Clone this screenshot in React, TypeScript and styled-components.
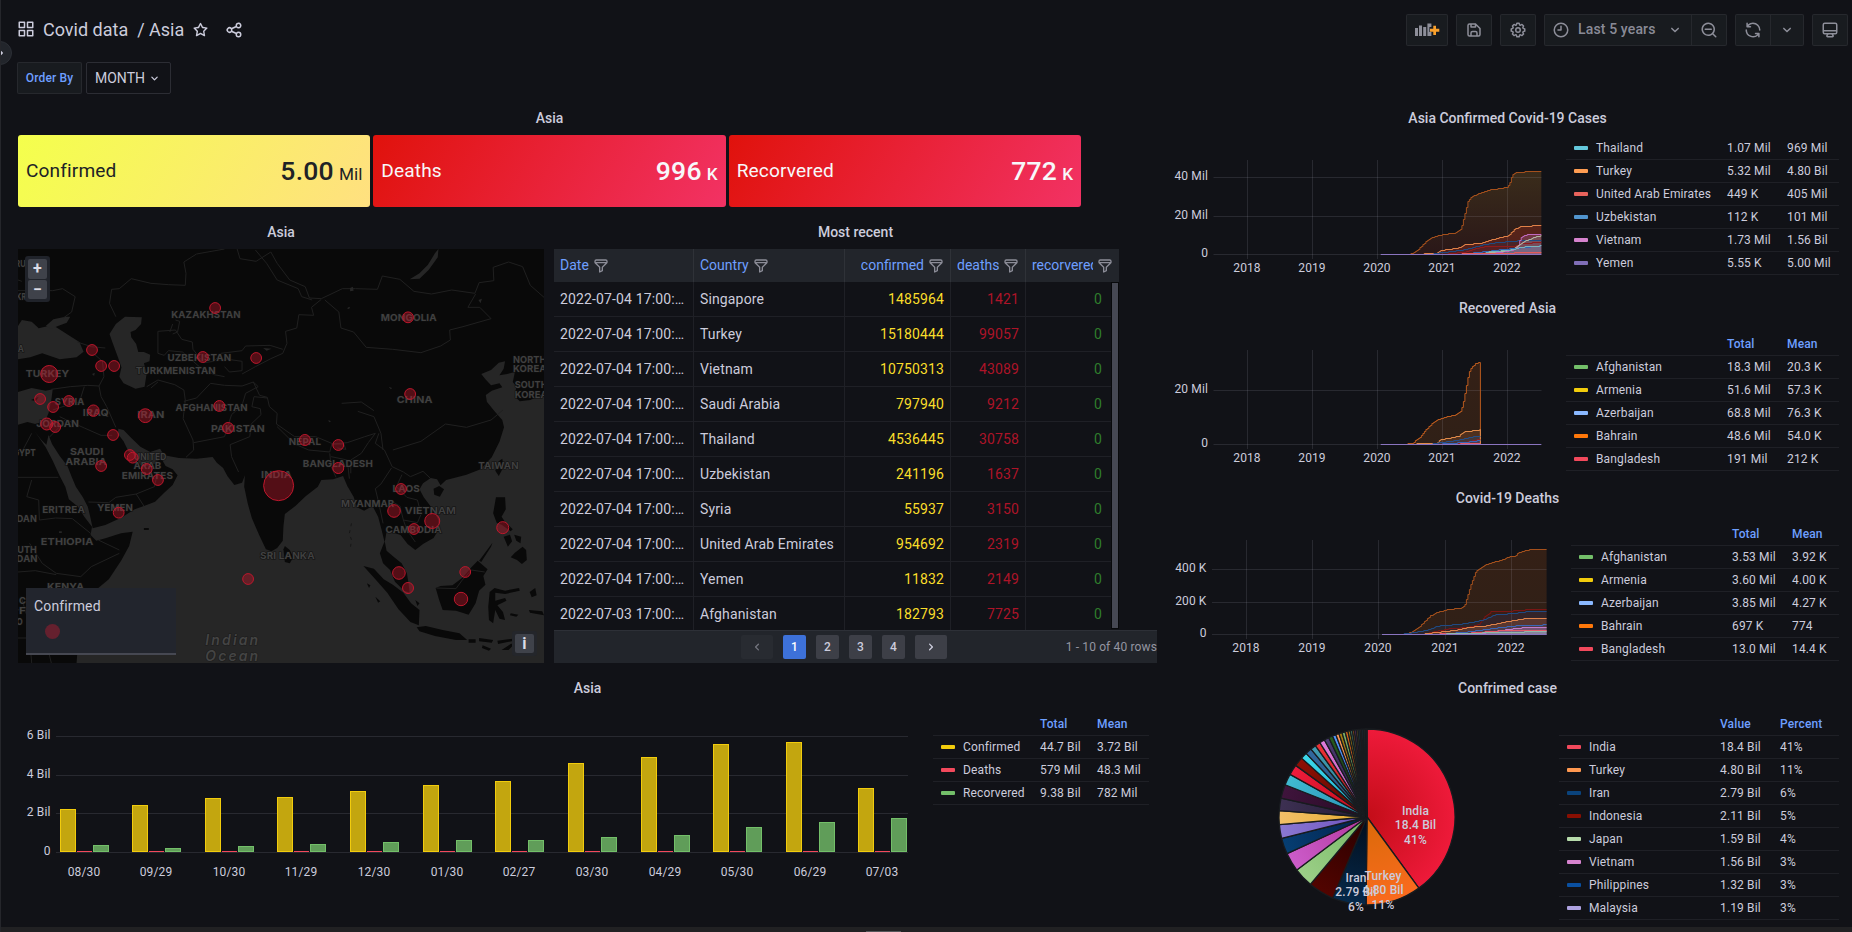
import React from "react";
import styled, { createGlobalStyle, css } from "styled-components";

const GlobalStyle = createGlobalStyle`
  *, *::before, *::after { box-sizing: border-box; }
  body {
    margin: 0;
    background: #111217;
    color: rgb(204, 204, 220);
    font-family: Roboto, "Liberation Sans", sans-serif;
    font-size: 14px;
    line-height: 1.5;
    letter-spacing: 0.01em;
    overflow: hidden;
  }
`;

const LINE = "rgba(204, 204, 220, 0.08)";
const MUTED = "rgba(204, 204, 220, 0.65)";
const LINK = "#6e9fff";

/* ---------- icons ---------- */

const ICONS = {
  apps: "M10,13H3a1,1,0,0,0-1,1v7a1,1,0,0,0,1,1h7a1,1,0,0,0,1-1V14A1,1,0,0,0,10,13ZM9,20H4V15H9ZM21,2H14a1,1,0,0,0-1,1v7a1,1,0,0,0,1,1h7a1,1,0,0,0,1-1V3A1,1,0,0,0,21,2ZM20,9H15V4h5Zm1,4H14a1,1,0,0,0-1,1v7a1,1,0,0,0,1,1h7a1,1,0,0,0,1-1V14A1,1,0,0,0,21,13Zm-1,7H15V15h5ZM10,2H3A1,1,0,0,0,2,3v7a1,1,0,0,0,1,1h7a1,1,0,0,0,1-1V3A1,1,0,0,0,10,2ZM9,9H4V4H9Z",
  star: "M22,9.67A1,1,0,0,0,21.14,9l-5.69-.83L12.9,3a1,1,0,0,0-1.8,0L8.55,8.16,2.86,9a1,1,0,0,0-.81.68,1,1,0,0,0,.25,1l4.13,4-1,5.68A1,1,0,0,0,6.9,21.44L12,18.77l5.1,2.67a.93.93,0,0,0,.46.12,1,1,0,0,0,.59-.19,1,1,0,0,0,.4-1l-1-5.68,4.13-4A1,1,0,0,0,22,9.67Zm-6.15,4a1,1,0,0,0-.29.88l.72,4.2-3.76-2a1.06,1.06,0,0,0-.94,0l-3.76,2,.72-4.2a1,1,0,0,0-.29-.88l-3-3,4.21-.61a1,1,0,0,0,.76-.55L12,5.7l1.88,3.82a1,1,0,0,0,.76.55l4.21.61Z",
  share: "M18,14a4,4,0,0,0-3.08,1.48l-5.1-2.35a3.64,3.64,0,0,0,0-2.26l5.1-2.35A4,4,0,1,0,14,6a4.17,4.17,0,0,0,.07.71L8.79,9.14a4,4,0,1,0,0,5.72l5.28,2.43A4.17,4.17,0,0,0,14,18a4,4,0,1,0,4-4ZM18,4a2,2,0,1,1-2,2A2,2,0,0,1,18,4ZM6,14a2,2,0,1,1,2-2A2,2,0,0,1,6,14Zm12,6a2,2,0,1,1,2-2A2,2,0,0,1,18,20Z",
  save: "M20.71,9.29l-6-6a1,1,0,0,0-.32-.21A1.09,1.09,0,0,0,14,3H6A3,3,0,0,0,3,6V18a3,3,0,0,0,3,3H18a3,3,0,0,0,3-3V10A1,1,0,0,0,20.71,9.29ZM9,5h4V7H9Zm6,14H9V16a1,1,0,0,1,1-1h4a1,1,0,0,1,1,1Zm4-1a1,1,0,0,1-1,1H17V16a3,3,0,0,0-3-3H10a3,3,0,0,0-3,3v3H6a1,1,0,0,1-1-1V6A1,1,0,0,1,6,5H7V8A1,1,0,0,0,8,9h6a1,1,0,0,0,1-1V6.41l4,4Z",
  cog: "M21.32,9.55l-1.89-.63.89-1.78A1,1,0,0,0,20.13,6L18,3.87a1,1,0,0,0-1.15-.19l-1.78.89-.63-1.89A1,1,0,0,0,13.5,2h-3a1,1,0,0,0-.95.68L8.92,4.57,7.14,3.68A1,1,0,0,0,6,3.87L3.87,6a1,1,0,0,0-.19,1.15l.89,1.78-1.89.63A1,1,0,0,0,2,10.5v3a1,1,0,0,0,.68.95l1.89.63-.89,1.78A1,1,0,0,0,3.87,18L6,20.13a1,1,0,0,0,1.15.19l1.78-.89.63,1.89a1,1,0,0,0,.95.68h3a1,1,0,0,0,.95-.68l.63-1.89,1.78.89A1,1,0,0,0,18,20.13L20.13,18a1,1,0,0,0,.19-1.15l-.89-1.78,1.89-.63A1,1,0,0,0,22,13.5v-3A1,1,0,0,0,21.32,9.55ZM20,12.78l-1.2.4A2,2,0,0,0,17.64,16l.57,1.14-1.1,1.1L16,17.64a2,2,0,0,0-2.79,1.16l-.4,1.2H11.22l-.4-1.2A2,2,0,0,0,8,17.64l-1.14.57-1.1-1.1L6.36,16A2,2,0,0,0,5.2,13.18L4,12.78V11.22l1.2-.4A2,2,0,0,0,6.36,8L5.79,6.89l1.1-1.1L8,6.36A2,2,0,0,0,10.82,5.2l.4-1.2h1.56l.4,1.2A2,2,0,0,0,16,6.36l1.14-.57,1.1,1.1L17.64,8a2,2,0,0,0,1.16,2.79l1.2.4ZM12,8a4,4,0,1,0,4,4A4,4,0,0,0,12,8Zm0,6a2,2,0,1,1,2-2A2,2,0,0,1,12,14Z",
  clock: "M12,2A10,10,0,1,0,22,12,10,10,0,0,0,12,2Zm0,18a8,8,0,1,1,8-8A8,8,0,0,1,12,20ZM12,6a1,1,0,0,0-1,1v4H8a1,1,0,0,0,0,2h4a1,1,0,0,0,1-1V7A1,1,0,0,0,12,6Z",
  down: "M17,9.17a1,1,0,0,0-1.41,0L12,12.71,8.46,9.17a1,1,0,0,0-1.41,0,1,1,0,0,0,0,1.42l4.24,4.24a1,1,0,0,0,1.42,0L17,10.59A1,1,0,0,0,17,9.17Z",
  zoomOut: "M21.71,20.29,18,16.61A9,9,0,1,0,16.61,18l3.68,3.68a1,1,0,0,0,1.42,0A1,1,0,0,0,21.71,20.29ZM11,18a7,7,0,1,1,7-7A7,7,0,0,1,11,18Zm4-8H7a1,1,0,0,0,0,2h8a1,1,0,0,0,0-2Z",
  sync: "M19.91,15.51H15.38a1,1,0,0,0,0,2h2.4A8,8,0,0,1,4,12a1,1,0,0,0-2,0,10,10,0,0,0,16.88,7.23V21a1,1,0,0,0,2,0V16.5A1,1,0,0,0,19.91,15.51ZM12,2A10,10,0,0,0,5.12,4.77V3a1,1,0,0,0-2,0V7.5a1,1,0,0,0,1,1h4.5a1,1,0,0,0,0-2H6.22A8,8,0,0,1,20,12a1,1,0,0,0,2,0A10,10,0,0,0,12,2Z",
  monitor: "M19,2H5A3,3,0,0,0,2,5V15a3,3,0,0,0,3,3H7.64l-.58,1a2,2,0,0,0,0,2,2,2,0,0,0,1.75,1h6.46A2,2,0,0,0,17,21a2,2,0,0,0,0-2l-.59-1H19a3,3,0,0,0,3-3V5A3,3,0,0,0,19,2ZM8.77,20,10,18H14l1.2,2ZM20,15a1,1,0,0,1-1,1H5a1,1,0,0,1-1-1V14H20Zm0-3H4V5A1,1,0,0,1,5,4H19a1,1,0,0,1,1,1Z",
  filter: "M19,2H5A3,3,0,0,0,2,5V6.17a3,3,0,0,0,.25,1.2l0,.06a2.81,2.81,0,0,0,.59.86L9,14.41V21a1,1,0,0,0,.47.85A1,1,0,0,0,10,22a1,1,0,0,0,.45-.11l4-2A1,1,0,0,0,15,19V14.41l6.12-6.12a2.81,2.81,0,0,0,.59-.86l0-.06A3,3,0,0,0,22,6.17V5A3,3,0,0,0,19,2ZM13.29,13.29A1,1,0,0,0,13,14v4.38l-2,1V14a1,1,0,0,0-.29-.71L5.41,8H18.59ZM20,6H4V5A1,1,0,0,1,5,4H19a1,1,0,0,1,1,1Z",
};

const Svg = styled.svg<{ $rotate?: number }>`
  display: block;
  flex: none;
  fill: currentColor;
  ${(p) => p.$rotate && css`transform: rotate(${p.$rotate}deg);`}
`;

function Icon({ name, size = 16, rotate }: { name: keyof typeof ICONS; size?: number; rotate?: number }) {
  return (
    <Svg viewBox="0 0 24 24" width={size} height={size} $rotate={rotate}>
      <path d={ICONS[name]} />
    </Svg>
  );
}

function AddPanelIcon() {
  return (
    <Svg viewBox="0 0 25 16" width="25" height="16">
      <path d="M0 6h3v8H0zM4 3.5h3V14H4zM8.200 5h3v9h-3zM12.400 1.500h4V5h-2v5h2v4h-4z" />
      <path d="M18.300 3.700h2.700v3h3.300v3H21v3.300h-2.700V9.700h-3.300v-3h3.300z" fill="#f9a02c" />
    </Svg>
  );
}

/* ---------- page frame ---------- */

const Page = styled.div`
  position: relative;
  width: 1852px;
  height: 932px;
  background: #111217;
  border-left: 1px solid #25262b;
  overflow: hidden;
  display: flex;
  flex-direction: column;
`;

const Knob = styled.div`
  position: absolute;
  left: -13px;
  top: 41px;
  width: 24px;
  height: 24px;
  border-radius: 50%;
  background: #22252b;
  border: 1px solid #2b2e35;
  display: flex;
  align-items: center;
  justify-content: center;
`;

const Header = styled.header`
  display: flex;
  align-items: center;
  justify-content: space-between;
  height: 32px;
  margin: 14px 4px 0 16px;
`;

const Crumbs = styled.div`
  display: flex;
  align-items: center;
  padding-bottom: 2px;
  font-size: 18px;
  letter-spacing: 0;
  white-space: pre;
`;

const Crumb = styled.span<{ $gap: number }>`
  margin-left: ${(p) => p.$gap}px;
`;

const IconSlot = styled.span<{ $gap: number }>`
  margin: 1px 0 0 ${(p) => p.$gap}px;
`;

const Tools = styled.div`
  display: flex;
  gap: 8px;
  color: ${MUTED};
`;

const ToolGroup = styled.div`
  display: flex;
  height: 32px;
  border: 1px solid ${LINE};
  border-radius: 2px;
  background: #181b1f;
`;

const Tool = styled.div<{ $w: number; $split?: boolean }>`
  display: flex;
  align-items: center;
  justify-content: center;
  width: ${(p) => p.$w}px;
  border-left: ${(p) => (p.$split ? `1px solid ${LINE}` : "0")};
`;

const RangeText = styled.span`
  font-weight: 500;
  width: 96px;
  padding: 0 0 1px 8px;
  white-space: nowrap;
`;

const Variables = styled.div`
  display: flex;
  gap: 4px;
  height: 32px;
  margin: 16px 0 6px 16px;
`;

const VarLabel = styled.div`
  width: 65px;
  border: 1px solid ${LINE};
  border-radius: 2px;
  background: #181b1f;
  color: ${LINK};
  font-size: 12px;
  font-weight: 500;
  line-height: 30px;
  text-align: center;
`;

const VarValue = styled.div`
  display: flex;
  align-items: center;
  gap: 2px;
  width: 85px;
  padding-left: 8px;
  border: 1px solid rgba(204, 204, 220, 0.15);
  border-radius: 2px;
  letter-spacing: 0;
`;

const Board = styled.main`
  display: grid;
  grid-template-columns: 1139px 681px;
  column-gap: 10px;
  padding-left: 17px;
  height: 827px;
`;

const Column = styled.div`
  display: flex;
  flex-direction: column;
`;

const Panel = styled.section<{ $w: number; $h: number }>`
  width: ${(p) => p.$w}px;
  height: ${(p) => p.$h}px;
`;

const PanelTitle = styled.h2`
  margin: 0;
  height: 35px;
  line-height: 36px;
  font-size: 14px;
  font-weight: 500;
  letter-spacing: 0;
  text-align: center;
`;

const PanelBody = styled.div`
  display: flex;
`;

const PanelRow = styled.div`
  display: flex;
  gap: 10px;
`;

const BottomBar = styled.footer`
  height: 5px;
  background: #212123;
  display: flex;
  align-items: flex-end;
`;

const Grip = styled.div`
  width: 35px;
  height: 1px;
  margin-left: 865px;
  background: #55565a;
`;

/* ---------- stat tiles ---------- */

const Tiles = styled.div`
  display: grid;
  grid-template-columns: repeat(3, 1fr);
  gap: 3px;
  height: 72px;
`;

const Tile = styled.div<{ $light?: boolean }>`
  display: flex;
  align-items: center;
  justify-content: space-between;
  padding: 0 8px;
  border-radius: 3px;
  color: ${(p) => (p.$light ? "#202226" : "#f7f8fa")};
  background: ${(p) =>
    p.$light
      ? "linear-gradient(120deg, #f4ff4c, #ffe080)"
      : "linear-gradient(120deg, #e0120c, #f23264)"};
`;

const TileName = styled.span`
  font-size: 19.1px;
`;

const TileValue = styled.span`
  font-size: 26.5px;
  font-weight: 500;
  letter-spacing: 0.01em;
`;

const TileUnit = styled.small<{ $light?: boolean }>`
  font-size: 17.200px;
  font-weight: ${(p) => (p.$light ? 400 : 500)};
  margin-left: 5px;
  letter-spacing: 0;
`;

function StatTile({ name, value, unit, light }: { name: string; value: string; unit: string; light?: boolean }) {
  return (
    <Tile $light={light}>
      <TileName>{name}</TileName>
      <TileValue>
        {value}
        <TileUnit $light={light}>{unit}</TileUnit>
      </TileValue>
    </Tile>
  );
}

/* ---------- map ---------- */

const MapFrame = styled.div`
  position: relative;
  width: 526px;
  height: 414px;
  overflow: hidden;
`;

const Layer = styled.svg`
  position: absolute;
  inset: 0;
  display: block;
  width: 526px;
  height: 414px;
`;

const ZoomBox = styled.div`
  position: absolute;
  left: 7px;
  top: 7px;
  width: 25px;
  height: 46px;
  padding: 3px;
  display: grid;
  gap: 1px;
  border-radius: 3px;
  background: #20232a;
`;

const MapButton = styled.div`
  width: 19px;
  height: 19.500px;
  border-radius: 2px;
  background: #3f424a;
  color: #dcdce6;
  font-size: 16px;
  font-weight: 700;
  line-height: 20px;
  text-align: center;
`;

const InfoBox = styled.div`
  position: absolute;
  right: 7px;
  bottom: 7px;
  padding: 3px;
  border-radius: 3px;
  background: #24262b;
`;

const MapLegend = styled.div`
  position: absolute;
  left: 8px;
  top: 339px;
  width: 150px;
  height: 67px;
  padding: 8px 8px 0;
  background: #22252d;
  border-bottom: 2px solid #464852;
`;

const LegendDot = styled.div`
  width: 15px;
  height: 15px;
  margin: 7px 0 0 11px;
  border-radius: 50%;
  background: #65202e;
`;

/* outlines are kept in survey units: 1500 wide, 1242 high, origin 51/87 */
const WATER = [
  "M218 1329L220 1300 210 1240 235 1160 262 1120 310 1078 345 1022 368 978 378 935 345 940 300 955 274 962 258 945 262 920 240 890 222 860 196 838 186 800 170 768 150 722 130 682 108 648 98 634 118 660 132 674 138 645 148 672 170 708 192 738 204 770 216 800 236 832 250 860 257 890 264 925 300 915 345 893 384 868 412 857 442 845 468 818 492 795 506 766 492 748 472 738 460 716 450 722 440 732 418 738 400 736 392 722 378 700 366 694 352 664 336 642 337 626 352 630 372 652 400 680 428 696 456 686 468 706 510 714 560 716 606 711 618 728 636 744 648 768 668 795 690 788 698 766 696 800 706 850 718 895 740 948 758 988 774 994 790 984 806 962 808 918 812 882 842 858 872 828 906 800 916 780 950 778 978 768 990 798 1008 830 1018 862 1038 872 1062 858 1078 890 1088 930 1096 965 1083 1000 1092 1030 1112 1050 1126 1085 1152 1112 1168 1118 1164 1085 1160 1060 1145 1030 1122 1010 1102 992 1097 965 1102 935 1122 938 1142 945 1162 972 1184 990 1206 972 1236 954 1250 930 1250 900 1234 868 1208 832 1196 808 1206 790 1228 774 1246 778 1256 796 1272 780 1330 764 1370 748 1402 712 1424 665 1437 622 1432 600 1410 574 1388 545 1385 525 1402 512 1432 502 1424 490 1400 496 1384 478 1372 462 1400 450 1422 428 1440 424 1436 446 1424 466 1446 462 1468 456 1462 486 1472 500 1468 530 1482 544 1512 540 1551 520V1329Z",
  "M51 318L62 300 90 305 110 325 150 315 190 342 226 366 238 395 218 412 170 418 120 400 86 412 51 418Z",
  "M130 318L152 298 186 290 200 290 190 308 165 318 146 326Z",
  "M312 342L330 312 356 290 404 292 402 312 386 330 372 336 374 352 388 372 394 396 410 396 428 404 426 424 410 430 418 460 412 500 386 506 352 490 340 470 346 442 336 412 322 372Z",
  "M51 516L90 504 130 512 150 508 146 540 138 580 128 604 100 612 78 606 51 614Z",
  "M1250 87L1248 112 1222 150 1196 176 1168 178 1196 160 1220 134 1240 100Z",
];

const ISLANDS = [
  "M808 988L812 978 826 990 836 1012 826 1030 812 1026Z",
  "M1036 1038L1066 1046 1094 1078 1120 1094 1150 1118 1172 1150 1196 1170 1194 1216 1170 1206 1136 1168 1104 1118 1072 1080Z",
  "M1188 1222L1214 1218 1262 1230 1310 1240 1332 1260 1300 1260 1240 1248 1196 1234Z",
  "M1242 1104L1256 1098 1290 1096 1320 1072 1344 1042 1362 1022 1390 1048 1378 1068 1384 1094 1366 1112 1356 1150 1336 1184 1300 1172 1262 1170 1252 1140Z",
  "M1396 1116L1410 1104 1440 1112 1480 1104 1482 1112 1440 1122 1412 1118 1412 1142 1440 1134 1444 1142 1418 1156 1434 1176 1440 1200 1424 1196 1412 1170 1406 1210 1394 1200 1392 1160Z",
  "M1414 832L1440 832 1442 868 1430 890 1440 906 1462 928 1456 934 1430 914 1416 908 1406 880Z",
  "M1468 998L1490 980 1500 990 1502 1020 1488 1032 1474 1020 1456 1012Z",
  "M1436 950L1454 944 1460 964 1448 980ZM1466 944L1486 950 1484 970 1472 962ZM1366 1022L1404 968 1400 980 1372 1026Z",
  "M1236 806L1252 798 1266 808 1254 830 1238 824Z",
  "M1412 752L1422 724 1432 716 1436 740 1422 768Z",
  "M1336 1258h20v10h-20zM1366 1254l40 6-4 8-36-4zM1418 1262l44-6 4 6-46 10zM1376 1276l24 10-6 6-20-8zM1430 1290l26-18 14-4-20 22z",
  "M1510 1116l16 -12 4 22-14 6zM1508 1170l38 4 5 12-40-8zM1456 1180l22 4-6 6-18-4zM88 540l22-10-8 14zM1046 1090l10 6-4 8zM1070 1130l14 14-6 4zM410 924h14v6h-14zM1184 1140l12 10-6 8z",
];

const BORDERS = [
  "M640 87L560 102 524 126 530 160 528 196 480 194 430 190 374 176 340 206 318 208 312 250 330 290",
  "M676 87L684 116 730 124 772 96 790 130 826 180 870 200 882 234 916 236 976 206 1014 206 1076 208 1090 168 1140 178 1180 214 1230 222 1288 210 1354 220 1366 188 1408 182 1406 142 1450 126 1490 140 1512 196 1551 232",
  "M728 90L760 130 790 180 850 206 860 230 890 240",
  "M926 240L966 276 972 324 1008 336 1044 382 1120 388 1200 398 1256 378 1284 360 1282 330 1320 320 1400 296 1368 262 1334 262 1356 222",
  "M916 238L888 262 894 286 852 284 846 324 814 334 818 370 806 400 772 416 728 440 690 462",
  "M806 388L770 376 700 378 690 392 630 400 610 424",
  "M610 424L580 428 550 388 548 366 518 358 500 330 450 334 450 400 468 406 480 392 520 396 568 440 610 464 640 470",
  "M620 420L650 418 690 424 690 452 654 456 640 440",
  "M500 300L512 304 506 336 492 342M492 312L484 336",
  "M418 500L450 480 498 494 524 510 528 540 522 596 550 660 552 690 530 712",
  "M524 544L560 534 600 490 640 496 690 498 722 486 736 500 700 520 690 556 660 584 640 650 552 668",
  "M722 486L740 526 762 532 768 560 790 580 788 612 840 650 900 650 950 672 990 668 1040 650 1070 640",
  "M790 620L840 672 880 690 940 696 946 672M962 684L986 688 980 672 950 672",
  "M762 534L724 530 718 560 742 566 744 584 716 612 712 650 656 674 660 710 680 756",
  "M940 700L944 740 958 772M944 710L990 720 996 776",
  "M1070 640L1050 668 1030 700 1000 720 1000 760",
  "M1080 640L1070 670 1096 690 1118 740 1150 756 1170 770 1206 754 1228 776",
  "M1116 744L1086 792 1070 806 1080 850 1092 910",
  "M1146 764L1130 800 1160 832 1190 840 1200 880M1120 846L1140 858 1150 900 1190 908 1200 884M1150 900L1160 930 1184 966",
  "M1020 574L1066 590 1086 640 1092 690M974 550L1030 546 1066 572",
  "M1120 690L1200 664 1270 612 1330 622 1400 600 1434 570",
  "M220 366L260 380 300 384M270 404L292 424 296 470 282 498",
  "M146 508L200 500 250 496 282 498 288 530 304 560 330 622",
  "M150 570L190 556 226 546 240 500M170 590L190 600 240 624 288 646 320 646M140 652L170 620 184 600",
  "M51 772H166M90 640L60 700M90 780L76 830 110 840 112 900 158 894 206 896 258 940",
  "M252 846L310 848 330 832 388 822 410 858M388 822L440 800 446 772 400 756",
  "M84 970L120 1030 160 1060 230 1070 260 1040 340 1000M340 990L280 960M51 1056L100 1052 160 1064M258 950L250 962",
  "M51 1170L90 1160M51 1254H80M136 1098L130 1260 146 1329",
  "M51 212H150L178 206 214 230 204 276 180 294M51 180L62 184",
  "M1244 1104L1300 1106 1318 1080 1344 1050 1382 1056",
  "M430 504L450 486M90 1329L80 1200 60 1130",
];

const LAKES = "M998 204l8-4 2 12-10 2zM990 264l6-4 2 4-6 4zM1108 500l10 4-4 4zM750 384l24 2-14 6zM936 600l8 4-6 3zM168 934h8v5h-8zM262 462l8-4-2 10zM1364 240l10-4-4 14z";

const mx = (x: number) => (x - 51) / 2.851;
const my = (y: number) => (y - 87) / 3;

type Label = [string, number, number, number];
/* text, centre x, centre y, drawn width */
const LABELS: Label[] = [
  ["KAZAKHSTAN", 587, 285, 198], ["MONGOLIA", 1165, 294, 160], ["UZBEKISTAN", 568, 414, 182],
  ["TURKMENISTAN", 501, 454, 228], ["TURKEY", 135, 462, 124], ["AFGHANISTAN", 603, 564, 206],
  ["IRAN", 430, 584, 78], ["PAKISTAN", 678, 628, 154], ["NEPAL", 869, 666, 92],
  ["SYRIA", 198, 547, 84], ["IRAQ", 273, 578, 74], ["JORDAN", 164, 612, 122],
  ["SAUDI", 247, 696, 96], ["ARABIA", 245, 727, 118], ["UNITED", 428, 711, 92], ["ARAB", 420, 739, 80],
  ["EMIRATES", 420, 767, 146], ["YEMEN", 328, 865, 102], ["ERITREA", 181, 871, 122],
  ["ETHIOPIA", 191, 966, 150], ["KENYA", 187, 1102, 106], ["INDIA", 788, 765, 88],
  ["BANGLADESH", 963, 731, 200], ["CHINA", 1182, 541, 102], ["TAIWAN", 1421, 738, 116],
  ["LAOS", 1158, 806, 78], ["MYANMAR", 1048, 852, 152], ["VIETNAM", 1227, 872, 146],
  ["CAMBODIA", 1179, 929, 160], ["SRI LANKA", 819, 1008, 156], ["NORTH", 1510, 420, 96],
  ["KOREA", 1510, 448, 96], ["SOUTH", 1514, 494, 94], ["KOREA", 1514, 525, 94],
  ["EGYPT", 62, 700, 80], ["SUDAN", 58, 896, 94], ["SOUTH", 58, 990, 94], ["SUDAN", 58, 1017, 98],
  ["RU", 58, 132, 30], ["KR", 60, 230, 28], ["A", 59, 387, 18], ["C", 64, 1142, 20], ["F", 64, 1174, 20], ["O", 56, 1205, 18],
];

const MARKERS: [number, number, number][] = [
  [613, 264, 5.9], [1163, 292, 5.9], [262, 390, 5.9], [578, 411, 5.9], [730, 414, 5.9], [288, 438, 5.9],
  [325, 438, 5.9], [140, 462, 9], [114, 537, 5.9], [196, 543, 5.9], [151, 561, 5.9], [266, 572, 6.2],
  [414, 587, 7.4], [625, 558, 5.9], [1169, 522, 5.9], [133, 612, 6.5], [157, 621, 5.9], [650, 624, 6],
  [322, 645, 5.9], [869, 660, 6], [964, 675, 5.9], [370, 705, 5.9], [378, 713, 5.9], [288, 738, 5.9],
  [418, 747, 5.9], [964, 744, 6], [450, 780, 5.9], [794, 797, 15.5], [1143, 807, 5.9], [338, 878, 5.9],
  [1123, 873, 6.8], [1232, 903, 8], [1180, 927, 5.9], [1433, 923, 6.5], [1137, 1059, 6.8],
  [1326, 1056, 5.9], [707, 1077, 5.9], [1163, 1104, 6], [1314, 1137, 7.2],
];

function WorldMap() {
  return (
    <MapFrame>
      <Layer viewBox="51 87 1500 1242" preserveAspectRatio="none">
        <rect x="51" y="87" width="1500" height="1242" fill="#090909" />
        {WATER.map((d) => <path key={d} d={d} fill="#262626" />)}
        {ISLANDS.map((d) => <path key={d} d={d} fill="#090909" />)}
        {BORDERS.map((d) => (
          <path key={d} d={d} fill="none" stroke="#202020" strokeWidth="1" strokeLinejoin="round" vectorEffect="non-scaling-stroke" />
        ))}
        <path d={LAKES} fill="#262626" />
        <path d="M1002 910L996 940 1002 960 998 990" fill="none" stroke="#161616" strokeDasharray="3 4" vectorEffect="non-scaling-stroke" />
      </Layer>
      <Layer viewBox="0 0 526 414">
        <g fontFamily="Inter, 'Open Sans', sans-serif" fontWeight="700" fontSize="9.5" fill="#404040" stroke="#101010" strokeWidth="1.200" paintOrder="stroke" textAnchor="middle">
          {LABELS.map(([t, x, y, w], i) => (
            <text key={i} x={mx(x)} y={my(y) + 3} textLength={w / 2.851} lengthAdjust="spacingAndGlyphs">{t}</text>
          ))}
        </g>
        <g fontFamily="Inter, 'Open Sans', sans-serif" fontStyle="italic" fontWeight="600" fontSize="14" fill="#444" stroke="#1b1b1b" strokeWidth="1.200" paintOrder="stroke">
          <text x={mx(585)} y={my(1276)} textLength="53">Indian</text>
          <text x={mx(585)} y={my(1324)} textLength="53">Ocean</text>
        </g>
        {MARKERS.map(([x, y, r], i) => (
          <circle key={i} cx={mx(x)} cy={my(y)} r={r - 0.5} fill="rgba(196,22,42,0.4)" stroke="#bd172c" strokeWidth="1" />
        ))}
      </Layer>
      <ZoomBox>
        <MapButton>+</MapButton>
        <MapButton>−</MapButton>
      </ZoomBox>
      <MapLegend>
        Confirmed
        <LegendDot />
      </MapLegend>
      <InfoBox>
        <MapButton>i</MapButton>
      </InfoBox>
    </MapFrame>
  );
}

/* ---------- table ---------- */

const COLS = "140px 151px 106px 75px 1fr";

const TableHead = styled.div`
  display: grid;
  grid-template-columns: ${COLS};
  width: 565px;
  height: 33px;
  background: #22252b;
`;

const HeadCell = styled.div<{ $end?: boolean }>`
  display: flex;
  align-items: center;
  justify-content: ${(p) => (p.$end ? "flex-end" : "flex-start")};
  gap: 4px;
  min-width: 0;
  padding: 0 6px;
  color: ${LINK};
  letter-spacing: 0;
  border-right: 1px solid ${LINE};
  &:last-child { border-right: 0; }
  svg { color: #8c8d98; }
`;

const HeadText = styled.span`
  overflow: hidden;
  white-space: nowrap;
`;

const TableBody = styled.div`
  display: flex;
  width: 565px;
  height: 348px;
  overflow: hidden;
`;

const Rows = styled.div`
  width: 557px;
`;

const Row = styled.div`
  display: grid;
  grid-template-columns: ${COLS};
  height: 35px;
  border-bottom: 1px solid ${LINE};
`;

const TONES = { plain: "rgb(204,204,220)", yellow: "#fade2a", red: "#ad1428", green: "#2f7d2c" };

const Cell = styled.div<{ $tone?: keyof typeof TONES; $end?: boolean }>`
  padding: 0 6px;
  line-height: 34px;
  white-space: nowrap;
  overflow: hidden;
  text-overflow: ellipsis;
  text-align: ${(p) => (p.$end ? "right" : "left")};
  color: ${(p) => TONES[p.$tone ?? "plain"]};
  border-right: 1px solid ${LINE};
  &:last-child { border-right: 0; padding-right: 9px; }
`;

const ScrollTrack = styled.div`
  width: 8px;
  height: 347px;
  padding: 1px;
  background: #08090b;
`;

const ScrollThumb = styled.div`
  height: 100%;
  background: #464853;
`;

const Pager = styled.div`
  display: grid;
  grid-template-columns: 1fr auto 1fr;
  align-items: center;
  width: 603px;
  height: 33px;
  padding-bottom: 1px;
  background: #22252b;
  border-top: 1px solid #2d3037;
  color: #9495a1;
  font-size: 12px;
`;

const PageButtons = styled.div`
  display: flex;
  gap: 10px;
  padding-right: 23px;
`;

const PageButton = styled.div<{ $kind?: "active" | "off" | "arrow" }>`
  display: flex;
  align-items: center;
  justify-content: center;
  width: ${(p) => (p.$kind === "off" || p.$kind === "arrow" ? 32 : 23)}px;
  height: 24px;
  border-radius: 2px;
  font-weight: 500;
  color: ${(p) => (p.$kind === "active" ? "#fff" : p.$kind === "off" ? "#73747e" : "#ccccdc")};
  background: ${(p) => (p.$kind === "active" ? "#3d71d9" : p.$kind === "off" ? "#282b31" : "#3d3f47")};
`;

const PageInfo = styled.span`
  text-align: right;
`;

const DATA: [string, string, string, string][] = [
  ["2022-07-04 17:00:00", "Singapore", "1485964", "1421"],
  ["2022-07-04 17:00:00", "Turkey", "15180444", "99057"],
  ["2022-07-04 17:00:00", "Vietnam", "10750313", "43089"],
  ["2022-07-04 17:00:00", "Saudi Arabia", "797940", "9212"],
  ["2022-07-04 17:00:00", "Thailand", "4536445", "30758"],
  ["2022-07-04 17:00:00", "Uzbekistan", "241196", "1637"],
  ["2022-07-04 17:00:00", "Syria", "55937", "3150"],
  ["2022-07-04 17:00:00", "United Arab Emirates", "954692", "2319"],
  ["2022-07-04 17:00:00", "Yemen", "11832", "2149"],
  ["2022-07-03 17:00:00", "Afghanistan", "182793", "7725"],
];

function RecentTable() {
  return (
    <div>
      <TableHead>
        {["Date", "Country", "confirmed", "deaths", "recorvered"].map((h, i) => (
          <HeadCell key={h} $end={i > 1 && i < 4}>
            <HeadText>{h}</HeadText>
            <Icon name="filter" />
          </HeadCell>
        ))}
      </TableHead>
      <TableBody>
        <Rows>
          {DATA.map(([date, country, confirmed, deaths]) => (
            <Row key={country}>
              <Cell>{date}</Cell>
              <Cell>{country}</Cell>
              <Cell $tone="yellow" $end>{confirmed}</Cell>
              <Cell $tone="red" $end>{deaths}</Cell>
              <Cell $tone="green" $end>0</Cell>
            </Row>
          ))}
        </Rows>
        <ScrollTrack><ScrollThumb /></ScrollTrack>
      </TableBody>
      <Pager>
        <span />
        <PageButtons>
          <PageButton $kind="off"><Icon name="down" rotate={90} /></PageButton>
          <PageButton $kind="active">1</PageButton>
          <PageButton>2</PageButton>
          <PageButton>3</PageButton>
          <PageButton>4</PageButton>
          <PageButton $kind="arrow"><Icon name="down" rotate={-90} /></PageButton>
        </PageButtons>
        <PageInfo>1 - 10 of 40 rows</PageInfo>
      </Pager>
    </div>
  );
}

/* ---------- series legend ---------- */

const LegendTable = styled.div<{ $w: number; $top: number }>`
  width: ${(p) => p.$w}px;
  margin-top: ${(p) => p.$top}px;
  font-size: 12px;
`;

const LegendRow = styled.div<{ $a: number; $b: number; $head?: boolean }>`
  display: grid;
  grid-template-columns: 8px 14px 8px 1fr ${(p) => p.$a}px ${(p) => p.$b}px;
  align-items: center;
  height: 23px;
  border-bottom: 1px solid ${LINE};
  white-space: nowrap;
  ${(p) => p.$head && css`color: ${LINK}; font-weight: 500;`}
`;

const Swatch = styled.i<{ $c: string }>`
  grid-column: 2;
  height: 4px;
  border-radius: 1px;
  background: ${(p) => p.$c};
`;

const SeriesName = styled.span`
  grid-column: 4;
`;

const FirstValue = styled.span`
  grid-column: 5;
`;

type LegendItem = [string, string, string, string];

function Legend({ w, a, b, head, items, top = 8 }: { w: number; a: number; b: number; head?: [string, string]; items: LegendItem[]; top?: number }) {
  return (
    <LegendTable $w={w} $top={top}>
      {head && (
        <LegendRow $a={a} $b={b} $head>
          <FirstValue>{head[0]}</FirstValue>
          <span>{head[1]}</span>
        </LegendRow>
      )}
      {items.map(([c, name, v1, v2]) => (
        <LegendRow key={name} $a={a} $b={b}>
          <Swatch $c={c} />
          <SeriesName>{name}</SeriesName>
          <FirstValue>{v1}</FirstValue>
          <span>{v2}</span>
        </LegendRow>
      ))}
    </LegendTable>
  );
}

/* ---------- time series ---------- */

const Plot = styled.svg`
  display: block;
  flex: none;
  overflow: visible;
  font-family: Roboto, sans-serif;
  font-size: 12px;
  letter-spacing: 0.01em;
`;

type Pt = [number, number];
type Series = { c: string; fill: string; pts: Pt[]; drop?: boolean };

/* series points are stored in a 1568x570 plotting space */
const px = (x: number) => x / 2.266 - 7;
const py = (y: number) => y / 3 - 35;

function stepPath(pts: Pt[]) {
  const p = pts.map(([x, y]) => [px(x), py(y)]);
  let d = `M${p[0][0].toFixed(1)} ${Math.round(p[0][1]) + 0.5}`;
  let prev = Math.round(p[0][1]);
  const end = p[p.length - 1][0];
  let k = 0;
  for (let x = p[0][0]; x <= end; x += 1.5) {
    while (k < p.length - 2 && p[k + 1][0] < x) k++;
    const t = Math.min(1, (x - p[k][0]) / (p[k + 1][0] - p[k][0]));
    const y = Math.round(p[k][1] + (p[k + 1][1] - p[k][1]) * t);
    if (y !== prev) {
      d += `H${x.toFixed(1)}V${y + 0.5}`;
      prev = y;
    }
  }
  return `${d}H${end.toFixed(1)}`;
}

const Chart = ({ id, ys, xs, left, right, series, bright }: {
  id: string; ys: [number, string][]; xs: number[]; left: number; right: number; series: Series[]; bright?: boolean;
}) => {
  const base = 119.5;
  return (
    <Plot width={right} height="150">
      <defs>
        <linearGradient id={id} x1="0" y1="0" x2="0" y2="1">
          <stop offset="0" stopColor={bright ? "#3a2c1b" : "#342016"} />
          <stop offset="1" stopColor={bright ? "#2a1718" : "#302017"} />
        </linearGradient>
      </defs>
      {series.map((s, i) => (
        <path key={i} d={`${stepPath(s.pts)}V${base}H${px(s.pts[0][0]).toFixed(1)}Z`} fill={i === 0 ? `url(#${id})` : s.fill} />
      ))}
      <g stroke="rgba(204,204,220,0.13)">
        {ys.map(([y]) => <line key={y} x1={left} x2={right - 24.500} y1={y + 0.5} y2={y + 0.5} />)}
        {xs.map((x) => <line key={x} x1={x + 0.5} x2={x + 0.5} y1="25" y2="124" />)}
      </g>
      {series.map((s, i) => (
        <path key={i} d={stepPath(s.pts) + (s.drop ? `V${base}` : "")} fill="none" stroke={s.c} strokeWidth="1" />
      ))}
      <g fill="rgb(204,204,220)">
        {ys.map(([y, t]) => <text key={y} x={left - 5.500} y={y + 3} textAnchor="end">{t}</text>)}
        {xs.map((x, i) => <text key={x} x={x} y="137" textAnchor="middle">{2018 + i}</text>)}
      </g>
    </Plot>
  );
};

const CONFIRMED: Series[] = [
  { c: "#a4501c", fill: "", pts: [[555, 463], [572, 459], [582, 450], [590, 440], [600, 427], [614, 413], [630, 405], [650, 401], [670, 397], [680, 388], [684, 375], [690, 345], [697, 305], [705, 290], [720, 281], [745, 269], [770, 264], [788, 260], [793, 245], [798, 222], [804, 217], [830, 214], [864, 213]] },
  { c: "#e08148", fill: "rgba(170,50,30,0.32)", pts: [[585, 461], [628, 459], [634, 450], [660, 446], [678, 442], [690, 433], [730, 428], [752, 418], [790, 405], [802, 388], [818, 377], [864, 376]] },
  { c: "#1f4a82", fill: "rgba(30,60,120,0.15)", pts: [[620, 459], [650, 455], [690, 448], [730, 434], [760, 427], [812, 421], [864, 420]] },
  { c: "#8e1a1c", fill: "rgba(120,20,20,0.25)", pts: [[650, 461], [690, 455], [715, 445], [735, 439], [800, 438], [822, 428], [864, 427]] },
  { c: "#c06ac0", fill: "rgba(200,110,190,0.25)", pts: [[730, 461], [770, 456], [798, 450], [810, 440], [818, 410], [832, 402], [864, 401]] },
  { c: "#aeb6a0", fill: "rgba(150,170,150,0.2)", pts: [[720, 460], [790, 450], [810, 438], [830, 420], [850, 410], [864, 405]] },
  { c: "#3168b5", fill: "rgba(90,120,180,0.25)", pts: [[680, 461], [720, 456], [770, 448], [810, 443], [864, 436]] },
  { c: "#79b4bd", fill: "rgba(130,140,180,0.3)", pts: [[725, 461], [750, 453], [790, 450], [820, 440], [864, 436]] },
  { c: "#e45b5b", fill: "rgba(230,90,90,0.3)", pts: [[630, 462], [700, 460], [740, 458], [864, 457]] },
  { c: "#8a74c0", fill: "rgba(180,160,200,0.2)", pts: [[500, 463], [864, 463]] },
];

const RECOVERED: Series[] = [
  { c: "#b85a1e", fill: "", drop: true, pts: [[555, 462], [572, 458], [582, 448], [592, 436], [602, 418], [616, 400], [630, 388], [646, 380], [668, 374], [680, 364], [686, 345], [692, 300], [700, 245], [708, 228], [716, 219], [726, 214]] },
  { c: "#e08a4a", fill: "rgba(160,90,50,0.28)", drop: true, pts: [[565, 461], [628, 459], [634, 448], [655, 443], [676, 438], [690, 424], [705, 422], [726, 418]] },
  { c: "#244e88", fill: "rgba(40,70,130,0.25)", pts: [[618, 459], [640, 456], [680, 448], [706, 440], [726, 436]] },
  { c: "#8e2024", fill: "rgba(120,30,30,0.25)", pts: [[640, 460], [690, 457], [710, 450], [726, 446]] },
  { c: "#3a66b8", fill: "rgba(60,80,160,0.3)", pts: [[620, 462], [690, 456], [712, 452], [726, 450]] },
  { c: "#e45b6b", fill: "rgba(230,90,110,0.4)", pts: [[640, 462], [690, 460], [726, 458]] },
  { c: "#8a74c0", fill: "none", pts: [[500, 463], [864, 463]] },
];

const DEATHS: Series[] = [
  { c: "#a4501c", fill: "", pts: [[555, 461], [570, 454], [586, 442], [598, 425], [612, 407], [630, 395], [650, 388], [680, 383], [690, 378], [697, 345], [706, 305], [716, 273], [730, 258], [750, 247], [770, 241], [790, 230], [804, 227], [812, 217], [836, 208], [876, 208]] },
  { c: "#7a1614", fill: "rgba(120,20,20,0.12)", pts: [[600, 460], [650, 446], [700, 440], [722, 432], [735, 410], [750, 394], [810, 391], [830, 388], [876, 387]] },
  { c: "#1f4a82", fill: "rgba(30,60,120,0.2)", pts: [[550, 461], [600, 451], [630, 437], [690, 430], [735, 418], [755, 404], [800, 399], [830, 394], [876, 393]] },
  { c: "#e0834a", fill: "rgba(200,110,70,0.25)", pts: [[600, 460], [640, 454], [675, 448], [700, 441], [740, 436], [780, 425], [825, 415], [876, 415]] },
  { c: "#3a66b8", fill: "rgba(50,80,150,0.25)", pts: [[640, 461], [700, 454], [760, 443], [810, 436], [876, 433]] },
  { c: "#c47ac8", fill: "rgba(190,120,190,0.35)", pts: [[640, 462], [730, 459], [770, 450], [820, 442], [876, 442]] },
  { c: "#e45b6b", fill: "rgba(150,160,190,0.3)", pts: [[590, 462], [700, 458], [780, 450], [876, 449]] },
  { c: "#8fb7a8", fill: "rgba(150,190,200,0.35)", pts: [[520, 462], [690, 460], [770, 455], [876, 454]] },
  { c: "#8a74c0", fill: "rgba(138,116,192,0.4)", pts: [[503, 463], [876, 463]] },
];

/* ---------- bar chart ---------- */

const BAR_X = [60, 132, 205, 277, 350, 423, 495, 568, 641, 713, 786, 858];
const CONF_TOP = [809, 805, 798, 797, 791, 785, 781, 763, 757, 744, 742, 788];
const REC_TOP = [845, 848, 846, 844, 842, 840, 840, 837, 835, 827, 822, 818];
const DAYS = ["08/30", "09/29", "10/30", "11/29", "12/30", "01/30", "02/27", "03/30", "04/29", "05/30", "06/29", "07/03"];
const Y_TICKS: [number, string][] = [[31, "6 Bil"], [70, "4 Bil"], [108, "2 Bil"], [147, "0"]];

function Bars() {
  return (
    <Plot width="915" height="180">
      <g stroke="rgba(204,204,220,0.13)">
        {Y_TICKS.map(([y]) => <line key={y} x1="38" x2="890" y1={y + 0.5} y2={y + 0.5} />)}
      </g>
      {BAR_X.map((bx, i) => {
        const x = bx - 18;
        const ct = CONF_TOP[i] - 705;
        const rt = REC_TOP[i] - 705;
        return (
          <g key={bx}>
            <rect x={x + 0.5} y={ct + 0.5} width="15" height={146 - ct} fill="#c3a60f" stroke="#f2cc0c" />
            <rect x={x + 17} y="146" width="15" height="1" fill="#f2495c" />
            <rect x={x + 33.500} y={rt + 0.5} width="15" height={146 - rt} fill="#609d59" stroke="#73bf69" />
            <text x={x + 24} y="171" textAnchor="middle" fill="rgb(204,204,220)">{DAYS[i]}</text>
          </g>
        );
      })}
      {Y_TICKS.map(([y, t]) => <text key={y} x="32.500" y={y + 3} textAnchor="end" fill="rgb(204,204,220)">{t}</text>)}
    </Plot>
  );
}

/* ---------- pie ---------- */

/* end angle, centre colour, rim colour */
const SLICES: [number, string, string][] = [
  [143.900, "#c30d18", "#ee1a3a"], [180.600, "#d96a08", "#fa6a1e"], [202.900, "#010d1c", "#06294a"], [220.100, "#280000", "#520400"],
  [232.900, "#76b866", "#9ccf87"], [245.400, "#b2389c", "#cc5cca"], [256, "#02204a", "#063e72"], [265, "#6d50bd", "#8a78d2"],
  [274.100, "#e6ab2c", "#f2c069"], [282.400, "#241c36", "#3d3052"], [291.500, "#260a22", "#3f143c"], [299, "#2890b4", "#40bbd2"],
  [305.900, "#c30d18", "#ee1c3c"], [312, "#5a0800", "#8e1004"], [316.300, "#1cb0d0", "#3cd8ea"], [320.500, "#234b78", "#32689e"],
  [324.100, "#25788c", "#429cb2"], [327.600, "#c01818", "#ec3236"], [331.100, "#b850ac", "#e07cdc"], [334.300, "#2c2048", "#4a3a70"],
  [337, "#143c10", "#265c1e"], [339.300, "#2a66c8", "#5296fa"], [341.400, "#c86428", "#ff9a58"], [343.500, "#785400", "#a47c10"],
  [345.600, "#4c7c3c", "#7cb268"], [347.500, "#944010", "#d4641c"], [349, "#6c5000", "#a88010"], [350.400, "#254c40", "#467c62"],
  [351.700, "#54280c", "#96501c"], [353, "#301838", "#5c2c62"], [354.200, "#483414", "#6c5424"], [355.400, "#102c34", "#204a58"],
  [356.500, "#301616", "#4c2226"], [357.600, "#182430", "#28384a"], [358.800, "#1c2024", "#2a3034"], [360, "#17191d", "#22252a"],
];

const polar = (deg: number, r: number) => {
  const a = (deg * Math.PI) / 180;
  return `${(200 + r * Math.sin(a)).toFixed(2)} ${(112 - r * Math.cos(a)).toFixed(2)}`;
};

function PieLabel({ x, y, lines }: { x: number; y: number; lines: string[] }) {
  return (
    <text fill="rgb(204,204,220)" fontWeight="500" textAnchor="middle">
      {lines.map((l, i) => <tspan key={l} x={x} y={y + i * 14.400}>{l}</tspan>)}
    </text>
  );
}

function Pie() {
  let from = 0;
  return (
    <Plot width="392" height="222">
      <defs>
        {SLICES.map(([, a, b], i) => (
          <radialGradient key={i} id={`pie${i}`} gradientUnits="userSpaceOnUse" cx="200" cy="112" r="88">
            <stop offset="0" stopColor={a} />
            <stop offset="1" stopColor={b} />
          </radialGradient>
        ))}
      </defs>
      {SLICES.map(([to], i) => {
        const start = from;
        from = to;
        return (
          <path
            key={i}
            d={`M200 112L${polar(start, 88)}A88 88 0 0 1 ${polar(to, 88)}Z`}
            fill={`url(#pie${i})`}
            stroke="#181b1f"
            strokeWidth="1.300"
            strokeLinejoin="round"
          />
        );
      })}
      <PieLabel x={248.500} y={110} lines={["India", "18.4 Bil", "41%"]} />
      <PieLabel x={189} y={177} lines={["Iran", "2.79 Bil", "6%"]} />
      <PieLabel x={216} y={175} lines={["Turkey", "4.80 Bil", "11%"]} />
    </Plot>
  );
}

/* ---------- page ---------- */

const TOTAL_MEAN: [string, string] = ["Total", "Mean"];

export default function App() {
  return (
    <>
      <GlobalStyle />
      <Page>
        <Header>
          <Crumbs>
            <Icon name="apps" size={18} />
            <Crumb $gap={8}>Covid data</Crumb>
            <Crumb $gap={9}>/ Asia</Crumb>
            <IconSlot $gap={8}><Icon name="star" size={17} /></IconSlot>
            <IconSlot $gap={16}><Icon name="share" size={18} /></IconSlot>
          </Crumbs>
          <Tools>
            <ToolGroup><Tool $w={40}><AddPanelIcon /></Tool></ToolGroup>
            <ToolGroup><Tool $w={34}><Icon name="save" size={18} /></Tool></ToolGroup>
            <ToolGroup><Tool $w={34}><Icon name="cog" size={18} /></Tool></ToolGroup>
            <ToolGroup>
              <Tool $w={146}>
                <Icon name="clock" size={18} />
                <RangeText>Last 5 years</RangeText>
                <Icon name="down" size={18} />
              </Tool>
              <Tool $w={35} $split><Icon name="zoomOut" size={18} /></Tool>
            </ToolGroup>
            <ToolGroup>
              <Tool $w={34}><Icon name="sync" size={18} /></Tool>
              <Tool $w={33} $split><Icon name="down" size={18} /></Tool>
            </ToolGroup>
            <ToolGroup><Tool $w={34}><Icon name="monitor" size={18} /></Tool></ToolGroup>
          </Tools>
        </Header>
        <Variables>
          <VarLabel>Order By</VarLabel>
          <VarValue>MONTH<Icon name="down" size={15} /></VarValue>
        </Variables>

        <Board>
          <Column>
            <Panel $w={1063} $h={114}>
              <PanelTitle>Asia</PanelTitle>
              <Tiles>
                <StatTile light name="Confirmed" value="5.00" unit="Mil" />
                <StatTile name="Deaths" value="996" unit="K" />
                <StatTile name="Recorvered" value="772" unit="K" />
              </Tiles>
            </Panel>
            <PanelRow>
              <Panel $w={526} $h={456}>
                <PanelTitle>Asia</PanelTitle>
                <WorldMap />
              </Panel>
              <Panel $w={603} $h={456}>
                <PanelTitle>Most recent</PanelTitle>
                <RecentTable />
              </Panel>
            </PanelRow>
            <Panel $w={1139} $h={257}>
              <PanelTitle>Asia</PanelTitle>
              <PanelBody>
                <Bars />
                <Legend w={216} a={57} b={52} head={TOTAL_MEAN} items={[
                  ["#f2cc0c", "Confirmed", "44.7 Bil", "3.72 Bil"],
                  ["#f2495c", "Deaths", "579 Mil", "48.3 Mil"],
                  ["#73bf69", "Recorvered", "9.38 Bil", "782 Mil"],
                ]} />
              </PanelBody>
            </Panel>
          </Column>

          <Column>
            <Panel $w={681} $h={190}>
              <PanelTitle>Asia Confirmed Covid-19 Cases</PanelTitle>
              <PanelBody>
                <Chart id="areaA" bright left={46.500} right={399} xs={[80, 145, 210, 275, 340]} ys={[[42, "40 Mil"], [81, "20 Mil"], [119, "0"]]} series={CONFIRMED} />
                <Legend w={273} a={60} b={52} top={2} items={[
                  ["#64c8dc", "Thailand", "1.07 Mil", "969 Mil"],
                  ["#ff9d52", "Turkey", "5.32 Mil", "4.80 Bil"],
                  ["#e8635c", "United Arab Emirates", "449 K", "405 Mil"],
                  ["#5195ce", "Uzbekistan", "112 K", "101 Mil"],
                  ["#d683ce", "Vietnam", "1.73 Mil", "1.56 Bil"],
                  ["#806eb7", "Yemen", "5.55 K", "5.00 Mil"],
                ]} />
              </PanelBody>
            </Panel>
            <Panel $w={681} $h={190}>
              <PanelTitle>Recovered Asia</PanelTitle>
              <PanelBody>
                <Chart id="areaB" left={46.500} right={399} xs={[80, 145, 210, 275, 340]} ys={[[65, "20 Mil"], [119, "0"]]} series={RECOVERED} />
                <Legend w={273} a={60} b={52} head={TOTAL_MEAN} items={[
                  ["#73bf69", "Afghanistan", "18.3 Mil", "20.3 K"],
                  ["#f2cc0c", "Armenia", "51.6 Mil", "57.3 K"],
                  ["#8ab8ff", "Azerbaijan", "68.8 Mil", "76.3 K"],
                  ["#ff780a", "Bahrain", "48.6 Mil", "54.0 K"],
                  ["#f2495c", "Bangladesh", "191 Mil", "212 K"],
                ]} />
              </PanelBody>
            </Panel>
            <Panel $w={681} $h={190}>
              <PanelTitle>Covid-19 Deaths</PanelTitle>
              <PanelBody>
                <Chart id="areaC" left={45} right={404} xs={[79, 145, 211, 278, 344]} ys={[[54, "400 K"], [87, "200 K"], [119, "0"]]} series={DEATHS} />
                <Legend w={268} a={60} b={47} head={TOTAL_MEAN} items={[
                  ["#73bf69", "Afghanistan", "3.53 Mil", "3.92 K"],
                  ["#f2cc0c", "Armenia", "3.60 Mil", "4.00 K"],
                  ["#8ab8ff", "Azerbaijan", "3.85 Mil", "4.27 K"],
                  ["#ff780a", "Bahrain", "697 K", "774"],
                  ["#f2495c", "Bangladesh", "13.0 Mil", "14.4 K"],
                ]} />
              </PanelBody>
            </Panel>
            <Panel $w={681} $h={257}>
              <PanelTitle>Confrimed case</PanelTitle>
              <PanelBody>
                <Pie />
                <Legend w={280} a={60} b={59} head={["Value", "Percent"]} items={[
                  ["#f2495c", "India", "18.4 Bil", "41%"],
                  ["#ff9850", "Turkey", "4.80 Bil", "11%"],
                  ["#0a437c", "Iran", "2.79 Bil", "6%"],
                  ["#890f02", "Indonesia", "2.11 Bil", "5%"],
                  ["#b7dbab", "Japan", "1.59 Bil", "4%"],
                  ["#d683ce", "Vietnam", "1.56 Bil", "3%"],
                  ["#0a50a1", "Philippines", "1.32 Bil", "3%"],
                  ["#aea2e0", "Malaysia", "1.19 Bil", "3%"],
                ]} />
              </PanelBody>
            </Panel>
          </Column>
        </Board>
        <BottomBar><Grip /></BottomBar>
        <Knob><Icon name="down" size={22} rotate={-90} /></Knob>
      </Page>
    </>
  );
}
